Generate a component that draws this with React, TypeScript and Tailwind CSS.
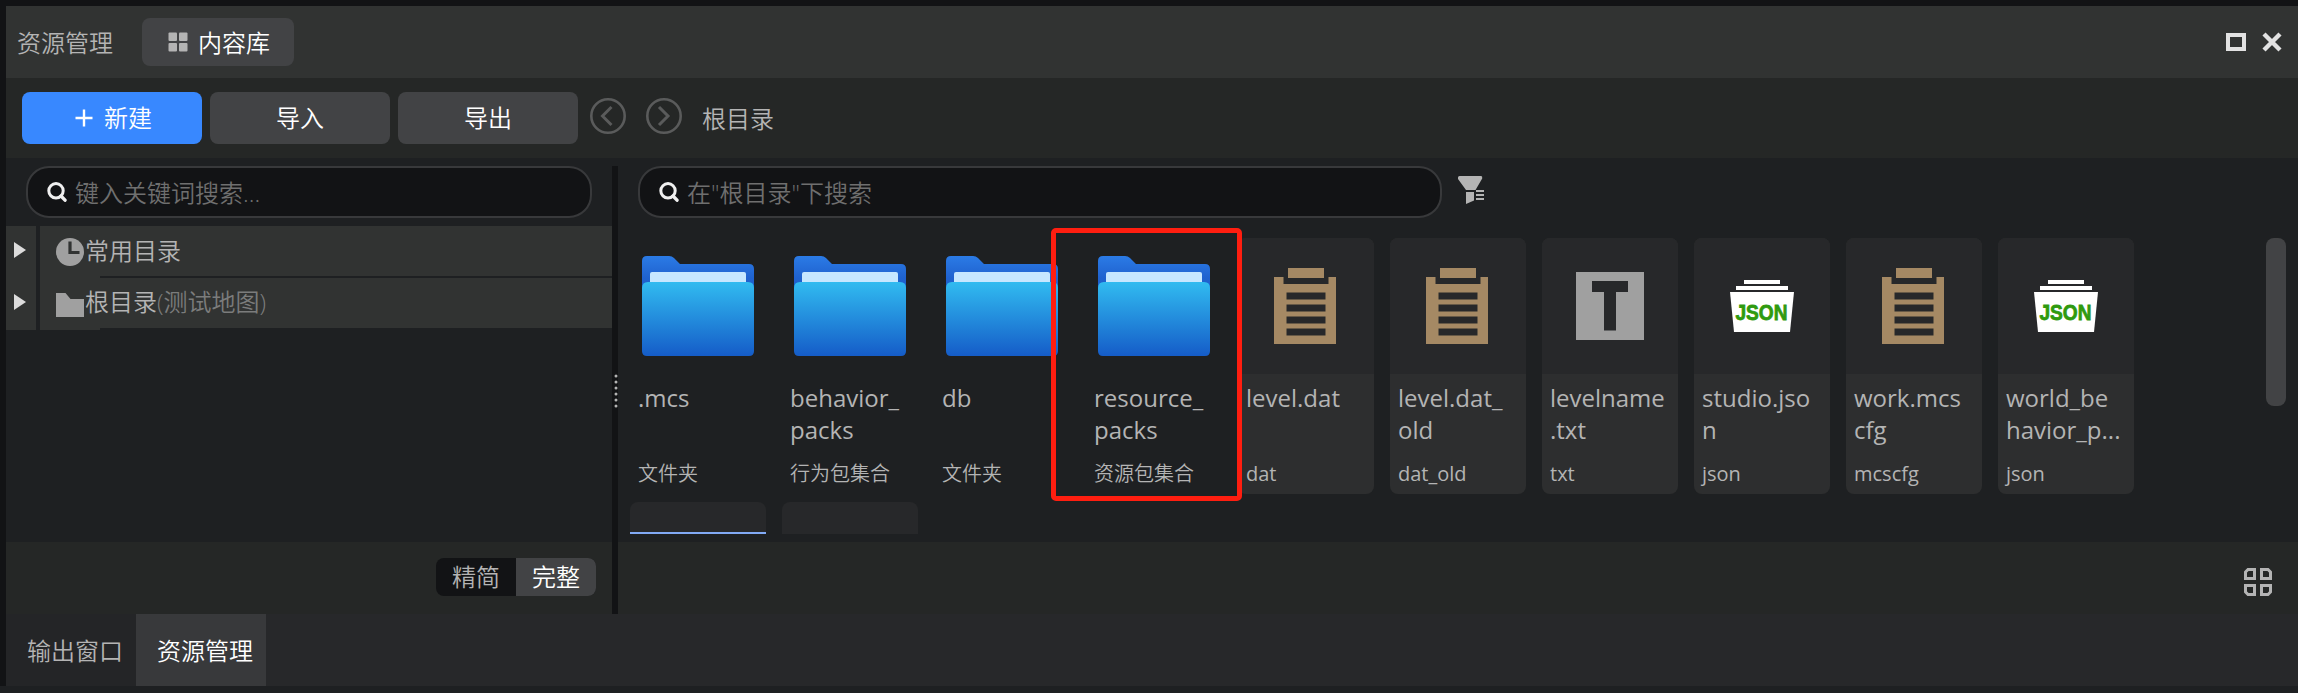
import React from "react";

type FileKind = "folder" | "data" | "text" | "json";

interface FileItem {
  name: string[];
  type: string;
  kind: FileKind;
}

const FILES: FileItem[] = [
  { name: [".mcs"], type: "文件夹", kind: "folder" },
  { name: ["behavior_", "packs"], type: "行为包集合", kind: "folder" },
  { name: ["db"], type: "文件夹", kind: "folder" },
  { name: ["resource_", "packs"], type: "资源包集合", kind: "folder" },
  { name: ["level.dat"], type: "dat", kind: "data" },
  { name: ["level.dat_", "old"], type: "dat_old", kind: "data" },
  { name: ["levelname", ".txt"], type: "txt", kind: "text" },
  { name: ["studio.jso", "n"], type: "json", kind: "json" },
  { name: ["work.mcs", "cfg"], type: "mcscfg", kind: "data" },
  { name: ["world_be", "havior_p..."], type: "json", kind: "json" },
];

function FolderArt() {
  return (
    <svg width="136" height="136" viewBox="0 0 136 136" className="block">
      <defs>
        <linearGradient id="folderBack" x1="0" y1="0" x2="0" y2="1">
          <stop offset="0" stopColor="#2b7be6" />
          <stop offset="0.3" stopColor="#1f62cf" />
          <stop offset="1" stopColor="#1a59c4" />
        </linearGradient>
        <linearGradient id="folderFront" x1="0" y1="0" x2="0" y2="1">
          <stop offset="0" stopColor="#31bbf0" />
          <stop offset="1" stopColor="#155cc8" />
        </linearGradient>
      </defs>
      <path d="M12 23q0-5 5-5h22q3 0 5 2l6 6h69q5 0 5 5v60H12z" fill="url(#folderBack)" />
      <path d="M20 36q0-2 2-2h92q2 0 2 2v14H20z" fill="#c6e7ff" />
      <path d="M12 50q0-6 6-6h100q6 0 6 6v63q0 5-5 5H17q-5 0-5-5z" fill="url(#folderFront)" />
    </svg>
  );
}

function ClipboardArt() {
  return (
    <svg width="136" height="136" viewBox="0 0 136 136" className="block">
      <rect x="50" y="30" width="36" height="10" fill="#a58964" />
      <path
        fillRule="evenodd"
        d="M36 54.500V39h9.500v7h45v-7H98v67H36zM48.500 54.500v7h39v-7zm0 12v7h39v-7zm0 12v7h39v-7zm0 12v7h39v-7z"
        fill="#a58964"
      />
    </svg>
  );
}

function TextArt() {
  return (
    <svg width="136" height="136" viewBox="0 0 136 136" className="block">
      <path fillRule="evenodd" d="M34 34h68v68H34zM50 43v11h12v38.500h12V54h12V43z" fill="#a0a0a0" />
    </svg>
  );
}

function JsonArt() {
  return (
    <svg width="136" height="136" viewBox="0 0 136 136" className="block">
      <rect x="50" y="42" width="36" height="4" fill="#fff" />
      <rect x="42" y="48" width="52" height="4" fill="#fff" />
      <path d="M36 54h64l-4 40H40z" fill="#fff" />
      <text
        x="41.500"
        y="81.500"
        textLength="52"
        lengthAdjust="spacingAndGlyphs"
        fill="#2f9a0f"
        stroke="#2f9a0f"
        strokeWidth="0.8"
        className="font-['Liberation_Sans',sans-serif] text-[22px] font-bold"
      >
        JSON
      </text>
    </svg>
  );
}

const ART: Record<FileKind, () => React.JSX.Element> = {
  folder: FolderArt,
  data: ClipboardArt,
  text: TextArt,
  json: JsonArt,
};

function FileCard({ item }: { item: FileItem }) {
  const Art = ART[item.kind];
  const plain = item.kind === "folder";
  return (
    <div className={`h-[256px] w-[136px] overflow-hidden rounded-lg ${plain ? "" : "bg-[#2d2e2f]"}`}>
      <div className={plain ? "h-[136px]" : "h-[136px] bg-[#27282a]"}>
        <Art />
      </div>
      <div className="flex h-[120px] flex-col pl-2">
        <div className="mt-2 h-[68px] text-[24px] leading-8">
          {item.name.map((line) => (
            <div key={line} className="whitespace-nowrap">
              {line}
            </div>
          ))}
        </div>
        <div className={plain ? "mt-[10px] text-[20px] font-[350] leading-7" : "mt-[10px] text-[20px] leading-7"}>
          {item.type}
        </div>
      </div>
    </div>
  );
}

function SearchBox({ className, placeholder }: { className: string; placeholder: string }) {
  return (
    <div
      className={`flex h-[52px] items-center rounded-[23px] border-2 border-[#38393b] bg-[#121315] pl-[19px] ${className}`}
    >
      <svg width="20" height="20" viewBox="0 0 20 20" className="block shrink-0">
        <circle cx="9" cy="8.800" r="7.200" fill="none" stroke="#f0f0f0" strokeWidth="3" />
        <path d="M14 14l4 4.200" stroke="#f0f0f0" strokeWidth="3.400" strokeLinecap="round" />
      </svg>
      <span className="ml-2 mt-[2px] whitespace-nowrap text-[24px] leading-8 text-[#6f6f6f]">{placeholder}</span>
    </div>
  );
}

function TreeArrow() {
  return (
    <div className="flex h-[52px] pl-2 pt-4">
      <svg width="12" height="16" viewBox="0 0 12 16" className="block">
        <path d="M0 0l12 8-12 8z" fill="#dcdcdc" />
      </svg>
    </div>
  );
}

function NavCircle({ d }: { d: string }) {
  return (
    <svg width="36" height="36" viewBox="0 0 36 36" className="block" fill="none" stroke="#5a5b5b">
      <circle cx="18" cy="18" r="16.700" strokeWidth="2.600" />
      <path d={d} strokeWidth="3" />
    </svg>
  );
}

function Header() {
  return (
    <div className="flex h-[72px] items-center bg-[#313332] pl-[11px] pr-4">
      <span className="mt-[2px] w-[125px] text-[24px] leading-8 text-[#b4b4b4]">资源管理</span>
      <div className="flex h-12 w-[152px] items-center rounded-lg bg-[#424345] pl-[26px] text-white">
        <svg width="20" height="20" viewBox="0 0 20 20" className="block" fill="#b4b4b4">
          <rect x="0.500" y="0.500" width="8.500" height="8.500" rx="1" />
          <rect x="11" y="0.500" width="8.500" height="8.500" rx="1" />
          <rect x="0.500" y="11" width="8.500" height="8.500" rx="1" />
          <rect x="11" y="11" width="8.500" height="8.500" rx="1" />
        </svg>
        <span className="ml-[10px] mt-[2px] text-[24px] leading-8">内容库</span>
      </div>
      <div className="ml-auto flex items-center gap-4">
        <svg width="20" height="20" viewBox="0 0 20 20" className="block">
          <path fillRule="evenodd" d="M0 1h20v18H0zM4 5v10h12V5z" fill="#e2e2e2" />
        </svg>
        <svg width="20" height="20" viewBox="0 0 20 20" className="block">
          <path d="M2 2l16 16M18 2L2 18" stroke="#e2e2e2" strokeWidth="4.400" />
        </svg>
      </div>
    </div>
  );
}

function Toolbar() {
  return (
    <div className="flex h-20 items-center bg-[#252726] pl-4 text-[24px] leading-8 text-white">
      <div className="flex h-[52px] w-[180px] items-center rounded-lg bg-[#3888ff] pl-[53px]">
        <svg width="18" height="18" viewBox="0 0 18 18" className="block">
          <path d="M9 0.500v17M0.500 9h17" stroke="#fff" strokeWidth="2.400" />
        </svg>
        <span className="ml-[11px]">新建</span>
      </div>
      <div className="ml-2 flex h-[52px] w-[180px] items-center justify-center rounded-lg bg-[#424345]">导入</div>
      <div className="ml-2 flex h-[52px] w-[180px] items-center justify-center rounded-lg bg-[#424345]">导出</div>
      <div className="mb-1 ml-3 flex gap-5">
        <NavCircle d="M21.500 9L12.500 18l9 9" />
        <NavCircle d="M13 9l9 9-9 9" />
      </div>
      <span className="ml-5 mt-px text-[#b4b4b4]">根目录</span>
    </div>
  );
}

function Sidebar() {
  return (
    <div className="flex w-[606px] flex-col">
      <div className="h-[384px] pt-2">
        <SearchBox className="ml-5 w-[566px]" placeholder="键入关键词搜索..." />
        <div className="mt-2 flex h-[104px] gap-1">
          <div className="w-[30px] bg-[#313332]">
            <TreeArrow />
            <TreeArrow />
          </div>
          <div className="flex-1 bg-[linear-gradient(#313332,#313332)] bg-[length:60px_104px] bg-no-repeat text-[24px] leading-8 text-[#b4b4b4]">
            <div className="flex h-[50px] items-center bg-[#313332] pl-4">
              <svg width="28" height="28" viewBox="0 0 28 28" className="mt-[2px] block">
                <circle cx="14" cy="14" r="14" fill="#a0a0a0" />
                <path d="M14 3.500v11h9.500" fill="none" stroke="#313332" strokeWidth="3.200" />
              </svg>
              <span className="ml-px">常用目录</span>
            </div>
            <div className="mt-[2px] flex h-[50px] items-center bg-[#313332] pl-4">
              <svg width="28" height="24" viewBox="0 0 28 24" className="mt-1 block">
                <path d="M0 0h9.500l5 6H28v18H0z" fill="#a0a0a0" />
              </svg>
              <span className="mb-[3px] ml-px">根目录</span>
              <span className="mb-[3px] text-[#7b7c7c]">(测试地图)</span>
            </div>
          </div>
        </div>
      </div>
      <div className="flex h-[72px] items-center justify-end bg-[#252726] pr-4 text-[24px] leading-8">
        <div className="mb-[2px] flex h-[38px] w-40 overflow-hidden rounded-lg bg-[#121315]">
          <div className="flex flex-1 items-center justify-center text-[#b4b4b4]">精简</div>
          <div className="flex flex-1 items-center justify-center bg-[#424345] text-white">完整</div>
        </div>
      </div>
    </div>
  );
}

function Splitter() {
  return (
    <div className="mt-2 flex w-[6px] flex-col items-end bg-[#121315] pt-[208px]">
      <svg width="4" height="34" viewBox="0 0 4 34" className="block" fill="#b4b4b4">
        {[2, 8, 14, 20, 26, 32].map((y) => (
          <circle key={y} cx="2" cy={y} r="1.500" />
        ))}
      </svg>
    </div>
  );
}

function FilterIcon() {
  return (
    <svg width="26" height="28" viewBox="0 0 26 28" className="block" fill="#b4b4b4">
      <path d="M1.500 0h21.500q1.500 0 1.200 1.800v.7L17.500 14H8L0 3V1.500Q0 0 1.500 0z" />
      <path d="M8 16h8v8.500L8 28z" />
      <path d="M18 14h8v2h-8zM18 18h8v2h-8zM18 22h8v2h-8z" />
    </svg>
  );
}

function Browser() {
  return (
    <div className="flex flex-1 flex-col">
      <div className="h-[384px] pt-2">
        <div className="flex">
          <SearchBox className="ml-5 w-[804px]" placeholder={'在"根目录"下搜索'} />
          <div className="ml-4 pt-[10px]">
            <FilterIcon />
          </div>
        </div>
        <div className="relative mt-5 flex h-[296px] justify-between overflow-visible pl-3 pr-3">
          <div className="grid grid-cols-[repeat(10,136px)] grid-rows-[256px_32px] gap-x-4 gap-y-2 font-normal text-[#b4b4b4]">
            {FILES.map((item) => (
              <FileCard key={item.name.join("")} item={item} />
            ))}
            <div className="flex flex-col justify-end overflow-hidden rounded-t-lg bg-[#27282a]">
              <div className="h-[2px] bg-[#82aaf5]" />
            </div>
            <div className="rounded-t-lg bg-[#27282a]" />
          </div>
          <div className="h-[168px] w-5 rounded-lg bg-[#424345]" />
          <div className="absolute left-[433px] top-[-10px] h-[273px] w-[191px] rounded-[5px] border-[5px] border-[#ff1e10]" />
        </div>
      </div>
      <div className="flex h-[72px] items-center justify-end bg-[#252726] pr-[26px]">
        <svg width="28" height="28" viewBox="0 0 28 28" className="mt-[8px] block" fill="none" stroke="#b4b4b4" strokeWidth="3">
          <path d="M4 1.500h6.500v9h-9V4z" />
          <path d="M24 1.500h-6.500v9h9V4z" />
          <path d="M4 26.500h6.500v-9h-9V24z" />
          <path d="M24 26.500h-6.500v-9h9V24z" />
        </svg>
      </div>
    </div>
  );
}

function BottomTabs() {
  return (
    <div className="flex h-[72px] bg-[#27282a] text-[24px] leading-8">
      <div className="flex w-[130px] items-center bg-[#242527] pl-[21px] pt-px text-[#b4b4b4]">输出窗口</div>
      <div className="flex w-[130px] items-center bg-[#38393b] pl-[21px] pt-px text-white">资源管理</div>
    </div>
  );
}

export default function App() {
  return (
    <div className="h-[693px] w-[2298px] overflow-hidden bg-[#1e2022] font-['Open_Sans','Noto_Sans_CJK_SC',sans-serif] font-[350]">
      <div className="flex h-[686px] flex-col border-l-[6px] border-t-[6px] border-[#121315]">
        <Header />
        <Toolbar />
        <div className="flex h-[456px]">
          <Sidebar />
          <Splitter />
          <Browser />
        </div>
        <BottomTabs />
      </div>
    </div>
  );
}
